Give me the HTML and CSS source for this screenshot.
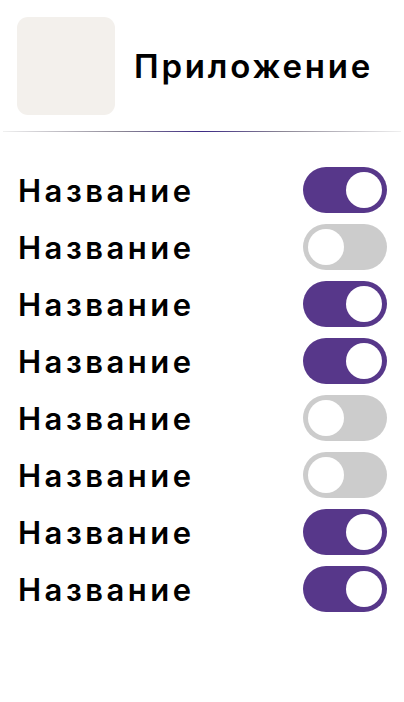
FILE: index.html
```html
<!DOCTYPE html>
<html lang="ru">
<head>
<meta charset="utf-8">
<link rel="stylesheet" href="styles.css">
</head>
<body>
<header class="app-header">
  <div class="app-icon"></div>
  <h1 class="app-title">Приложение</h1>
</header>
<div class="divider"></div>
<ul class="settings">
  <li class="row"><span class="label">Название</span><span class="toggle on"><span class="knob"></span></span></li>
  <li class="row"><span class="label">Название</span><span class="toggle"><span class="knob"></span></span></li>
  <li class="row"><span class="label">Название</span><span class="toggle on"><span class="knob"></span></span></li>
  <li class="row"><span class="label">Название</span><span class="toggle on"><span class="knob"></span></span></li>
  <li class="row"><span class="label">Название</span><span class="toggle"><span class="knob"></span></span></li>
  <li class="row"><span class="label">Название</span><span class="toggle"><span class="knob"></span></span></li>
  <li class="row"><span class="label">Название</span><span class="toggle on"><span class="knob"></span></span></li>
  <li class="row"><span class="label">Название</span><span class="toggle on"><span class="knob"></span></span></li>
</ul>
</body>
</html>
```
FILE: styles.css
```css
* { box-sizing: border-box; }
html, body { margin: 0; padding: 0; background: #fff; }
body {
  width: 404px;
  height: 702px;
  overflow: hidden;
  font-family: Inter, "Noto Sans", sans-serif;
  color: #000;
}
.app-header {
  display: flex;
  align-items: center;
  gap: 19px;
  padding: 17px 17px 0 17px;
  height: 115px;
}
.app-icon {
  width: 98px;
  height: 98px;
  border-radius: 11px;
  background: #f3f0ec;
  flex: none;
}
.app-title {
  margin: 0;
  font-size: 33px;
  font-weight: 600;
  letter-spacing: 2.8px;
  line-height: 1;
}
.divider {
  margin: 16px 3px 0 3px;
  height: 1px;
  background: linear-gradient(90deg, #f0f0f0 0%, #8a8594 30%, #3d2a85 50%, #8a8594 70%, #f0f0f0 100%);
}
.settings {
  list-style: none;
  margin: 35px 0 0 0;
  padding: 0 17px 0 18px;
  display: flex;
  flex-direction: column;
  gap: 11px;
}
.row {
  display: flex;
  align-items: center;
  justify-content: space-between;
  height: 46px;
}
.label {
  font-size: 31px;
  font-weight: 600;
  letter-spacing: 3.5px;
  line-height: 1;
}
.toggle {
  width: 84px;
  height: 46px;
  border-radius: 23px;
  background: #cccccc;
  display: flex;
  align-items: center;
  padding: 0 5px;
}
.toggle.on {
  background: #57378a;
  justify-content: flex-end;
}
.knob {
  width: 36px;
  height: 36px;
  border-radius: 50%;
  background: #fff;
}
```
